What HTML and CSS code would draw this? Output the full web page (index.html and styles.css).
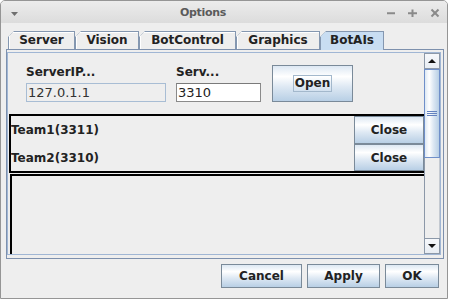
FILE: index.html
```html
<!DOCTYPE html>
<html lang="en">
<head>
    <meta charset="UTF-8">
    <meta name="viewport" content="width=device-width, initial-scale=1.0">
    <title>Options</title>
    <link rel="stylesheet" href="styles.css">
</head>
<body>

    <div class="window">
        <div class="titlebar">
            <span class="menu-btn">
                <svg width="28" height="22" viewBox="0 0 28 22"><polygon points="10,11 17,11 13.5,15" fill="#6f6f6f"/></svg>
            </span>
            <span class="title">Options</span>
            <span class="win-btns">
                <svg width="70" height="22" viewBox="0 0 70 22" stroke="#8a8a8a" stroke-width="2" fill="none">
                    <line x1="10" y1="12.3" x2="18" y2="12.3"/>
                    <line x1="31" y1="12.3" x2="40" y2="12.3"/>
                    <line x1="35.5" y1="8.5" x2="35.5" y2="16"/>
                    <line x1="54.5" y1="8.5" x2="61.5" y2="15.5"/>
                    <line x1="61.5" y1="8.5" x2="54.5" y2="15.5"/>
                </svg>
            </span>
        </div>

        <div class="content">
            <div class="tabs">
                <div class="tab tab-server"><span>Server</span></div>
                <div class="tab tab-vision"><span>Vision</span></div>
                <div class="tab tab-botcontrol"><span>BotControl</span></div>
                <div class="tab tab-graphics"><span>Graphics</span></div>
                <div class="tab tab-botais selected"><span>BotAIs</span></div>
            </div>

            <div class="tab-panel">
                <div class="scroll-pane">
                    <div class="viewport">
                        <div class="connect-row">
                            <div class="field-group ip-group">
                                <label for="server-ip">ServerIP...</label>
                                <input class="field disabled" id="server-ip" type="text" value="127.0.1.1" readonly>
                            </div>
                            <div class="field-group port-group">
                                <label for="server-port">Serv...</label>
                                <input class="field" id="server-port" type="text" value="3310">
                            </div>
                            <button class="btn open-btn"><span class="focus">Open</span></button>
                        </div>

                        <div class="team-list">
                            <div class="team-row">
                                <span class="team-name">Team1(3311)</span>
                                <button class="btn close-btn">Close</button>
                            </div>
                            <div class="team-row">
                                <span class="team-name">Team2(3310)</span>
                                <button class="btn close-btn">Close</button>
                            </div>
                        </div>

                        <div class="empty-panel"></div>
                    </div>

                    <div class="scrollbar">
                        <div class="sb-btn">
                            <svg width="10" height="6" viewBox="0 0 10 6"><polygon points="1,5 9,5 5,1" fill="#111"/></svg>
                        </div>
                        <div class="sb-thumb">
                            <svg width="10" height="6" viewBox="0 0 10 6" stroke="#6382bf" stroke-width="1">
                                <line x1="0" y1="0.5" x2="10" y2="0.5"/>
                                <line x1="0" y1="2.5" x2="10" y2="2.5"/>
                                <line x1="0" y1="4.5" x2="10" y2="4.5"/>
                            </svg>
                        </div>
                        <div class="sb-track"></div>
                        <div class="sb-btn">
                            <svg width="10" height="6" viewBox="0 0 10 6"><polygon points="1,1 9,1 5,5" fill="#111"/></svg>
                        </div>
                    </div>
                </div>
            </div>

            <div class="dialog-buttons">
                <button class="btn cancel-btn">Cancel</button>
                <button class="btn apply-btn">Apply</button>
                <button class="btn ok-btn">OK</button>
            </div>
        </div>
    </div>

</body>
</html>
```

FILE: styles.css
```css
body {
    margin: 0;
    background-color: white;
    font-family: 'DejaVu Sans', sans-serif;
}

.window {
    width: 448px;
    height: 299px;
    box-sizing: border-box;
    border: 1px solid #959595;
    border-radius: 5px 5px 0 0;
    background-color: #eeeeee;
    display: flex;
    flex-direction: column;
    overflow: hidden;
}

/* title bar */

.titlebar {
    height: 22px;
    flex: none;
    display: grid;
    grid-template-columns: 28px 1fr 70px;
    background: linear-gradient(#ececec, #dcdcdc);
}

.titlebar svg {
    display: block;
}

.title {
    text-align: center;
    font-weight: bold;
    font-size: 11px;
    letter-spacing: -0.3px;
    line-height: 20px;
    padding-top: 2px;
    color: #5a5a5a;
}

/* body */

.content {
    flex: 1;
    padding: 8px 3px 0 5px;
    display: flex;
    flex-direction: column;
}

.tabs {
    display: flex;
    align-items: flex-start;
    height: 18px;
    margin-left: 2px;
}

.tab {
    height: 18px;
    box-sizing: border-box;
    padding: 1px 1px 0 1px;
    background-color: #8497b0;
    clip-path: polygon(0 6px, 6px 0, 100% 0, 100% 100%, 0 100%);
}

.tab span {
    display: block;
    height: 100%;
    background-color: #eeeeee;
    box-shadow: inset 1px 1px 0 #ffffff;
    clip-path: polygon(0 4px, 4px 0, 100% 0, 100% 100%, 0 100%);
    font-weight: bold;
    font-size: 12px;
    line-height: 17px;
    text-align: center;
    color: #222;
}

.tab.selected {
    height: 19px;
    margin-bottom: -1px;
    position: relative;
    z-index: 1;
}

.tab.selected span {
    background-color: #c8ddf2;
    box-shadow: none;
}

.tab-server { width: 67px; }
.tab-vision { width: 64px; }
.tab-botcontrol { width: 97px; }
.tab-graphics { width: 84px; }
.tab-botais { width: 64px; }

.tab-panel {
    height: 210px;
    box-sizing: border-box;
    border: 1px solid #7d90ad;
    padding: 2px 2px 3px 0;
}

.scroll-pane {
    height: 100%;
    box-sizing: border-box;
    border: 1px solid #a0b6d4;
    display: flex;
}

.viewport {
    flex: 1;
    overflow: hidden;
}

/* server connect row */

.connect-row {
    height: 61px;
    box-sizing: border-box;
    display: flex;
    align-items: flex-end;
    padding: 0 0 12px 18px;
}

.field-group {
    display: flex;
    flex-direction: column;
}

.ip-group {
    width: 140px;
    margin-right: 10px;
}

.port-group {
    width: 85px;
    margin-right: 11px;
}

label {
    font-weight: bold;
    font-size: 12px;
    line-height: 14px;
    color: #222;
    margin-bottom: 4px;
}

.field {
    width: 100%;
    height: 19px;
    box-sizing: border-box;
    margin: 0;
    padding: 0 1px;
    border: 1px solid #8a8a8a;
    border-top-color: #7a7a7a;
    background-color: white;
    font-family: 'DejaVu Sans', sans-serif;
    font-size: 13px;
    color: #222;
    outline: none;
}

.field.disabled {
    background-color: #eeeeee;
    border-color: #a8bdd4;
    color: #333;
}

.btn {
    box-sizing: border-box;
    margin: 0;
    padding: 0;
    border: 1px solid #7a8a99;
    background: linear-gradient(#dde8f3 0%, #ffffff 30%, #dde8f3 60%, #b8cfe5 100%);
    font-family: 'DejaVu Sans', sans-serif;
    font-weight: bold;
    font-size: 12px;
    color: #222;
}

.open-btn {
    width: 81px;
    height: 37px;
}

.focus {
    display: inline-block;
    border: 1px solid #a3b8cc;
    padding: 0 1px;
    line-height: 15px;
}

/* teams */

.team-list {
    margin-left: 1px;
    border: 2px solid black;
    border-right: none;
}

.team-row {
    height: 28px;
    display: flex;
    align-items: center;
    justify-content: space-between;
}

.team-row:last-child {
    height: 27px;
}

.team-name {
    font-weight: bold;
    font-size: 12px;
    color: #222;
}

.close-btn {
    width: 70px;
    height: 100%;
}

.empty-panel {
    margin: 1px 0 0 2px;
    height: 120px;
    border-top: 2px solid black;
    border-left: 2px solid black;
}

/* scrollbar */

.scrollbar {
    width: 16px;
    flex: none;
    display: flex;
    flex-direction: column;
}

.sb-btn {
    height: 16px;
    box-sizing: border-box;
    border: 1px solid #8c98a8;
    background: linear-gradient(#f6f8fb, #e8edf3);
    display: flex;
    align-items: center;
    justify-content: center;
}

.sb-btn svg,
.sb-thumb svg {
    display: block;
}

.sb-thumb {
    height: 89px;
    box-sizing: border-box;
    border: 1px solid #6f8fc9;
    background: linear-gradient(to right, #dde8f3 0%, #ffffff 30%, #dde8f3 60%, #b8cfe5 100%);
    display: flex;
    align-items: center;
    justify-content: center;
}

.sb-track {
    flex: 1;
    border-left: 1px solid #8c98a8;
    border-right: 1px solid #c4c9d0;
    background-color: #eeeeee;
}

/* dialog buttons */

.dialog-buttons {
    display: flex;
    justify-content: flex-end;
    gap: 5px;
    margin-top: 5px;
    padding-right: 5px;
}

.dialog-buttons .btn {
    height: 24px;
}

.cancel-btn { width: 81px; }
.apply-btn { width: 73px; }
.ok-btn { width: 54px; }
```
